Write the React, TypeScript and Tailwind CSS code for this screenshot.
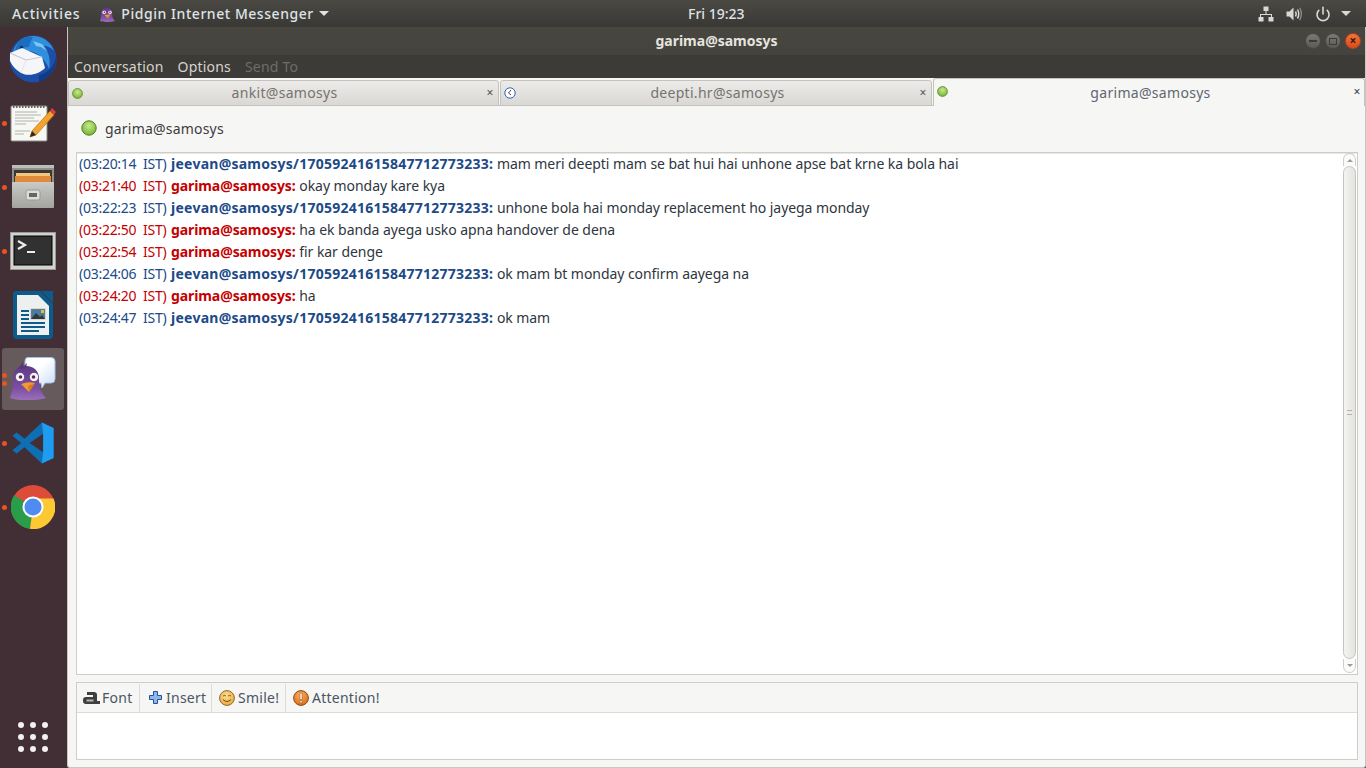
import React from "react";
import { Power } from "lucide-react";

const FONT = "font-['Noto_Sans','Open_Sans',sans-serif]";

interface Message {
  time: string;
  nick: string;
  text: string;
  mine: boolean;
}

const JEEVAN = "jeevan@samosys/17059241615847712773233:";
const GARIMA = "garima@samosys:";

const messages: Message[] = [
  { time: "(03:20:14  IST)", nick: JEEVAN, text: "mam meri deepti mam se bat hui hai unhone apse bat krne ka bola hai", mine: false },
  { time: "(03:21:40  IST)", nick: GARIMA, text: "okay monday kare kya", mine: true },
  { time: "(03:22:23  IST)", nick: JEEVAN, text: "unhone bola hai monday replacement ho jayega monday", mine: false },
  { time: "(03:22:50  IST)", nick: GARIMA, text: "ha ek banda ayega usko apna handover de dena", mine: true },
  { time: "(03:22:54  IST)", nick: GARIMA, text: "fir kar denge", mine: true },
  { time: "(03:24:06  IST)", nick: JEEVAN, text: "ok mam bt monday confirm aayega na", mine: false },
  { time: "(03:24:20  IST)", nick: GARIMA, text: "ha", mine: true },
  { time: "(03:24:47  IST)", nick: JEEVAN, text: "ok mam", mine: false },
];

const PidginBird = ({ width, height, id }: { width: number; height: number; id: string }) => (
  <svg width={width} height={height} viewBox="0 0 36 38">
    <defs>
      <linearGradient id={id} x1="0" y1="0" x2="0" y2="1">
        <stop offset="0%" stopColor="#5f3a86" />
        <stop offset="65%" stopColor="#7c4fa3" />
        <stop offset="100%" stopColor="#9a70ba" />
      </linearGradient>
    </defs>
    <path d="M0 36 C2 30 3 24 3 16 C3 8 8 4 16 4 C24 4 29 9 29 17 C29 25 31 31 36 36 C26 39 8 39 0 36Z" fill={`url(#${id})`} />
    <path d="M8 7 L13 0 L13 5 L17 1 L16 6Z" fill="#5a3480" />
    <circle cx="10" cy="15" r="4.6" fill="#f6f0f8" stroke="#4b2a6b" strokeWidth="0.6" />
    <circle cx="24" cy="15" r="4.6" fill="#f6f0f8" stroke="#4b2a6b" strokeWidth="0.6" />
    <circle cx="10.5" cy="15" r="1.8" fill="#5b2a5a" />
    <circle cx="23.5" cy="15" r="1.8" fill="#5b2a5a" />
    <path d="M11 22 Q18 19 25 21 L19 30Z" fill="#f09a30" />
    <path d="M18 24 L25 21 L19 30Z" fill="#d97a1c" />
  </svg>
);

const Thunderbird = () => (
  <svg width="48" height="48" viewBox="0 0 48 48">
    <circle cx="24" cy="24" r="23.5" fill="#1c4fa8" />
    <path d="M30 47 C40 44 48 34 47 22 C46 30 40 38 30 40Z" fill="#123a85" />
    <path d="M4 17 C6 9 12 2 22 1 C32 0 42 6 45 16 C40 11 37 11 35 11 C40 17 42 26 40 34 C37 26 32 20 24 17 C18 15 10 15 4 17Z" fill="#2f8fdc" />
    <path d="M24 6 L33 9 L38 16 L32 12 L27 11Z" fill="#7ec6f2" />
    <path d="M11 5 C14 2 20 1 24 2 C22 6 20 9 20 12 C16 12 10 14 6 16 C7 11 9 8 11 5Z" fill="#1b6dc2" />
    <circle cx="12.5" cy="12.5" r="1.7" fill="#0b2c55" />
    <path d="M1 26 L1 18 L13 13 L33 22 L36 33 C30 39 20 42 12 38 C7 35 3 31 1 26Z" fill="#f6f6f9" />
    <path d="M1 18 L17 25 L33 22" fill="none" stroke="#c4c8d4" strokeWidth="1.1" />
    <path d="M12 38 L17 25" fill="none" stroke="#dcdfe6" strokeWidth="0.8" />
  </svg>
);

const Notepad = () => (
  <svg width="46" height="38" viewBox="0 0 46 38">
    <rect x="1" y="2" width="36" height="35" rx="1" fill="#f7f7f3" stroke="#8b8b86" />
    <path d="M3 2.5 h32" stroke="#66665f" strokeWidth="3" strokeDasharray="1.5 1.5" />
    <path d="M5 8h22M5 11h26M5 14h19M5 17h24M5 20h11M5 27h15M5 30h9" stroke="#b0b0ac" strokeWidth="1" />
    <path d="M20 33 L22 27 L40 7 L44 11 L26 31Z" fill="#f2a431" stroke="#c06c10" strokeWidth="0.7" />
    <path d="M40 7 L42 4 L46 8 L44 11Z" fill="#d8413a" />
    <path d="M20 33 L22 27 L26 31Z" fill="#2a2a2a" />
  </svg>
);

const FileCabinet = () => (
  <svg width="42" height="44" viewBox="0 0 42 44">
    <defs>
      <linearGradient id="cab" x1="0" y1="0" x2="0" y2="1">
        <stop offset="0%" stopColor="#c9c9c6" />
        <stop offset="100%" stopColor="#a3a3a0" />
      </linearGradient>
    </defs>
    <rect x="0" y="0" width="42" height="42" rx="2" fill="#8f8f8c" />
    <rect x="0" y="0" width="42" height="3" fill="#bdbdba" />
    <rect x="2" y="5" width="38" height="12" fill="#3a3836" />
    <rect x="4" y="8" width="34" height="3" fill="#f3c77b" />
    <rect x="3" y="11" width="36" height="6" fill="#e08a3c" />
    <rect x="0" y="17" width="42" height="26" rx="1" fill="url(#cab)" />
    <rect x="14" y="25" width="14" height="10" rx="2" fill="#dcdcda" stroke="#9a9a98" />
    <rect x="17" y="28" width="8" height="4" fill="#66665f" />
  </svg>
);

const Terminal = () => (
  <svg width="46" height="38" viewBox="0 0 46 38">
    <rect x="0.5" y="0.5" width="45" height="37" fill="#d2d2ce" stroke="#9a9a96" />
    <rect x="4" y="4" width="38" height="29" fill="#313131" stroke="#000" />
    <path d="M8 9 L15 13 L8 17" fill="none" stroke="#eeeeee" strokeWidth="2.2" />
    <path d="M17 20 H25" stroke="#eeeeee" strokeWidth="2" />
  </svg>
);

const Writer = () => (
  <svg width="40" height="48" viewBox="0 0 40 48">
    <path d="M3 0 H27 L40 13 V44 Q40 48 36 48 H4 Q0 48 0 44 V3 Q0 0 3 0Z" fill="#0d5a8c" />
    <path d="M28 0 H40 V12Z" fill="#0d5a8c" />
    <path d="M4 4 H25 L36 15 V44 H4Z" fill="#eef0f0" />
    <path d="M8 20h8M8 24h8M8 28h8M8 32h24M8 36h24M8 40h18" stroke="#0d5a8c" strokeWidth="2" />
    <rect x="18" y="18" width="14" height="10" fill="#4b7c9c" stroke="#8a8a8a" strokeWidth="0.5" />
    <path d="M18 28 L23 22 L27 26 L29 24 L32 28Z" fill="#33373a" />
    <rect x="28" y="19" width="3" height="3" fill="#e8b93a" />
  </svg>
);

const Pidgin = () => (
  <>
    <svg className="absolute left-[22px] top-[9px]" width="32" height="32" viewBox="0 0 32 32">
      <defs>
        <linearGradient id="bub" x1="0" y1="0" x2="1" y2="1">
          <stop offset="40%" stopColor="#ffffff" />
          <stop offset="100%" stopColor="#c6dcf6" />
        </linearGradient>
      </defs>
      <path d="M4 0.5 H27 Q31 0.5 31 4 V22 Q31 26 27 26 H21 L18 31 L17 26 H4 Q1 26 1 22 V4 Q1 0.5 4 0.5Z" fill="url(#bub)" stroke="#a5c0e4" />
    </svg>
    <div className="absolute left-[8px] top-[14px]">
      <PidginBird width={36} height={38} id="birdDock" />
    </div>
  </>
);

const VSCode = () => (
  <svg width="42" height="42" viewBox="0 0 100 100">
    <path d="M71 1 L99 14 V86 L71 99 L30 60 L11 75 L1 67 L22 50 L1 33 L11 25 L30 40Z" fill="#0f6fb4" />
    <path d="M71 1 L99 14 V86 L71 99 L74 72 L74 28Z" fill="#1f9cf0" />
    <path d="M74 28 L42 50 L74 72Z" fill="#412f35" />
  </svg>
);

const Chrome = () => (
  <svg width="44" height="44" viewBox="0 0 44 44">
    <circle cx="22" cy="22" r="22" fill="#dd4b39" />
    <path d="M22 22 L3.2 10.2 A22 22 0 0 0 19 43.8 Z" fill="#2a9d4a" />
    <path d="M22 22 L22 13.5 L42.5 13.5 A22 22 0 0 1 19 43.8 Z" fill="#fcc934" />
    <circle cx="22" cy="22" r="10.5" fill="#fff" />
    <circle cx="22" cy="22" r="8.5" fill="#4f8bf0" />
  </svg>
);

const DockItem = ({ children, dots = 0, active = false }: { children?: React.ReactNode; dots?: number; active?: boolean }) => (
  <div className={`relative w-[62px] h-[62px] ml-[2px] mb-[2px] rounded-[3px] flex items-center justify-center ${active ? "bg-[#665a5c]" : ""}`}>
    {dots > 0 && (
      <div className="absolute left-0 top-0 bottom-0 flex flex-col justify-center gap-[3px]">
        {Array.from({ length: dots }).map((_, i) => (
          <span key={i} className="block w-[5px] h-[5px] rounded-full bg-[#e95420]" />
        ))}
      </div>
    )}
    {children}
  </div>
);

const StatusDot = ({ size = 10, id }: { size?: number; id: string }) => (
  <svg width={size} height={size} viewBox="0 0 16 16" className="shrink-0">
    <defs>
      <radialGradient id={id} cx="50%" cy="35%" r="70%">
        <stop offset="0%" stopColor="#c7ea8c" />
        <stop offset="100%" stopColor="#6fae2e" />
      </radialGradient>
    </defs>
    <circle cx="8" cy="8" r="7.2" fill={`url(#${id})`} stroke="#4e7f20" strokeWidth="1" />
  </svg>
);

const ClockDot = () => (
  <svg width="12" height="12" viewBox="0 0 12 12" className="shrink-0">
    <circle cx="6" cy="6" r="5.2" fill="#fff" stroke="#2f62b5" strokeWidth="1" />
    <path d="M7 3 L4.5 6 L7 8" fill="none" stroke="#333" strokeWidth="0.9" />
  </svg>
);

const ChatTab = ({ name, active, icon, grow }: { name: string; active?: boolean; icon: React.ReactNode; grow: string }) => (
  <div
    className={`${grow} relative flex pl-[3px] rounded-t-[3px] border border-[#c4c2bd] -mb-px ${
      active
        ? "h-[28px] pr-[3px] bg-[#f6f6f5] border-b-0 items-start pt-[7px]"
        : "h-[26px] pr-[4px] items-center bg-gradient-to-b from-[#ecebe9] to-[#d9d8d5] mr-px"
    }`}
  >
    {icon}
    <span className={`flex-1 text-center text-[14px] leading-none tracking-[0.3px] ${active ? "text-[#5f6670]" : "text-[#77736e]"}`}>{name}</span>
    <span className={`text-[12px] leading-none w-[8px] text-center ${active ? "text-[#2f3a4a]" : "text-[#555]"}`}>×</span>
  </div>
);

const ToolButton = ({ icon, label, className }: { icon: React.ReactNode; label: string; className: string }) => (
  <div className={`h-[28px] flex items-center ${className}`}>
    {icon}
    <span className="text-[14px] text-[#4a5563] leading-none tracking-[0.25px]">{label}</span>
  </div>
);

const FontIcon = () => (
  <svg width="17" height="13" viewBox="0 0 17 13">
    <path d="M4 1 H11 Q14 1 14 4 V10 H17 V13 H3 Q0 13 0 10 V9 Q0 6 3 6 H10 V4 H4Z" fill="#3f3f3f" />
    <rect x="3.5" y="8.5" width="7" height="2" fill="#b5b5b5" />
  </svg>
);

const PlusIcon = () => (
  <svg width="13" height="13" viewBox="0 0 13 13">
    <path d="M4.5 0.5 H8.5 V4.5 H12.5 V8.5 H8.5 V12.5 H4.5 V8.5 H0.5 V4.5 H4.5Z" fill="#8db6ea" stroke="#24539c" />
  </svg>
);

const SmileIcon = () => (
  <svg width="16" height="16" viewBox="0 0 16 16">
    <defs>
      <radialGradient id="sm" cx="45%" cy="35%" r="70%">
        <stop offset="0%" stopColor="#fbdf8f" />
        <stop offset="100%" stopColor="#eba73d" />
      </radialGradient>
    </defs>
    <circle cx="8" cy="8" r="7.4" fill="url(#sm)" stroke="#8f6a2a" />
    <path d="M4 6 Q5.5 4.8 7 6M9 6 Q10.5 4.8 12 6" fill="none" stroke="#7a4a10" strokeWidth="0.9" />
    <path d="M4 9.5 Q8 13.5 12 9.5" fill="none" stroke="#7a4a10" strokeWidth="1" />
  </svg>
);

const AttentionIcon = () => (
  <svg width="16" height="16" viewBox="0 0 16 16">
    <defs>
      <radialGradient id="att" cx="45%" cy="30%" r="75%">
        <stop offset="0%" stopColor="#f8b060" />
        <stop offset="100%" stopColor="#d96a12" />
      </radialGradient>
    </defs>
    <circle cx="8" cy="8" r="7.4" fill="url(#att)" stroke="#8f4a10" />
    <rect x="6.8" y="3" width="2.4" height="6.5" rx="0.8" fill="#fbeee0" stroke="#8f3f08" strokeWidth="0.5" />
    <circle cx="8" cy="11.8" r="1.3" fill="#fbeee0" stroke="#8f3f08" strokeWidth="0.5" />
  </svg>
);

const NetworkIcon = () => (
  <svg width="16" height="16" viewBox="0 0 16 16" fill="#d8d8d6">
    <rect x="5.5" y="0.5" width="5" height="4.5" />
    <rect x="0.5" y="11" width="5" height="4.5" />
    <rect x="10.5" y="11" width="5" height="4.5" />
    <path d="M7.5 5h1v3h5.5v3h-1V9H3v2H2V8h5.5z" />
  </svg>
);

const VolumeIcon = () => (
  <svg width="16" height="16" viewBox="0 0 16 16" fill="none">
    <path d="M0.5 5.5 H3.5 L7.5 1.5 V14.5 L3.5 10.5 H0.5Z" fill="#d8d8d6" />
    <path d="M9.5 5.5 Q11 8 9.5 10.5" stroke="#d8d8d6" strokeWidth="1.5" />
    <path d="M11.5 3.5 Q14 8 11.5 12.5" stroke="#d8d8d6" strokeWidth="1.5" />
    <path d="M13.7 1.8 Q17 8 13.7 14.2" stroke="#8d8c88" strokeWidth="1.3" />
  </svg>
);

export default function App() {
  return (
    <div className={`w-[1366px] h-[768px] overflow-hidden flex flex-col bg-[#412f35] ${FONT}`}>
      {/* top bar */}
      <div className="h-[27px] shrink-0 flex items-center bg-gradient-to-b from-[#4a4944] to-[#393834] text-[#dfe3e6] text-[14px] font-medium relative">
        <span className="ml-[12px] tracking-[0.8px]">Activities</span>
        <span className="ml-[20px] mr-[6px]">
          <PidginBird width={15} height={16} id="birdTop" />
        </span>
        <span className="tracking-[0.55px]">Pidgin Internet Messenger</span>
        <span className="ml-[5px] w-0 h-0 border-l-[5px] border-r-[5px] border-t-[5px] border-l-transparent border-r-transparent border-t-[#dfe3e6]" />
        <span className="absolute left-[688px] top-[3px] text-[14px]">Fri 19:23</span>
        <div className="ml-auto mr-[15px] flex items-center text-[#d8d8d6]">
          <span className="mr-[12px]"><NetworkIcon /></span>
          <span className="mr-[13px]"><VolumeIcon /></span>
          <Power size={16} strokeWidth={2.4} className="mr-[10px]" />
          <span className="w-0 h-0 border-l-[5px] border-r-[5px] border-t-[5px] border-l-transparent border-r-transparent border-t-[#d8d8d6]" />
        </div>
      </div>

      <div className="flex-1 flex min-h-0">
        {/* dock */}
        <div className="w-[67px] shrink-0 flex flex-col bg-[#412f35] pt-px">
          <DockItem><Thunderbird /></DockItem>
          <DockItem dots={1}><Notepad /></DockItem>
          <DockItem dots={1}><FileCabinet /></DockItem>
          <DockItem dots={1}><Terminal /></DockItem>
          <DockItem><Writer /></DockItem>
          <DockItem dots={2} active><Pidgin /></DockItem>
          <DockItem dots={1}><VSCode /></DockItem>
          <DockItem dots={1}><Chrome /></DockItem>
          <div className="mt-auto mb-[16px] ml-[18px] grid grid-cols-3 gap-x-[6px] gap-y-[6px] w-[30px]">
            {Array.from({ length: 9 }).map((_, i) => (
              <span key={i} className="block w-[6px] h-[6px] rounded-full bg-[#f2f0f0]" />
            ))}
          </div>
        </div>

        {/* window */}
        <div className="flex-1 flex flex-col min-w-0 bg-[#f6f6f5] border-l border-r border-b border-[#c8c6c2] rounded-b-[3px]">
          <div className="h-[28px] pb-[2px] shrink-0 flex items-center relative bg-gradient-to-b from-[#47463f] to-[#44433e]">
            <span className="flex-1 text-center text-[14px] font-bold text-[#e6e4df]">garima@samosys</span>
            <div className="absolute right-[4px] top-[6px] flex gap-[4px]">
              <span className="w-[16px] h-[16px] rounded-full bg-gradient-to-b from-[#7a7974] to-[#5b5a55] border border-[#4a4945] flex items-center justify-center">
                <span className="block w-[8px] h-[2px] bg-[#3c3b37]" />
              </span>
              <span className="w-[16px] h-[16px] rounded-full bg-gradient-to-b from-[#7a7974] to-[#5b5a55] border border-[#4a4945] flex items-center justify-center">
                <span className="block w-[8px] h-[7px] border border-[#3c3b37]" />
              </span>
              <span className="w-[16px] h-[16px] rounded-full bg-gradient-to-b from-[#f0743a] to-[#d9491c] border border-[#b5431a] flex items-center justify-center text-[#3c1a0a] text-[12px] leading-none font-bold">×</span>
            </div>
          </div>

          <div className="h-[23px] shrink-0 flex items-center bg-[#3c3b37] text-[14px] pl-[6px] gap-[14px] text-[#d6d3cd] tracking-[0.2px]">
            <span>Conversation</span>
            <span>Options</span>
            <span className="text-[#6f6d68]">Send To</span>
          </div>

          {/* tabs */}
          <div className="h-[28px] shrink-0 flex items-end bg-[#f6f6f5] border-b border-[#c4c2bd]">
            <ChatTab name="ankit@samosys" icon={<StatusDot size={11} id="d1" />} grow="w-[431px]" />
            <ChatTab name="deepti.hr@samosys" icon={<ClockDot />} grow="w-[432px]" />
            <ChatTab name="garima@samosys" icon={<StatusDot size={11} id="d3" />} active grow="flex-1" />
          </div>

          <div className="h-[46px] pb-[2px] shrink-0 flex items-center pl-[13px] gap-[8px]">
            <StatusDot size={16} id="d4" />
            <span className="text-[14px] text-[#3c3c3c] tracking-[0.2px]">garima@samosys</span>
          </div>

          {/* log */}
          <div className="ml-[8px] mr-[7px] h-[523px] shrink-0 flex bg-white border border-[#cfcdc9] shadow-[inset_0_1px_0_#e8e7e4]">
            <div className="flex-1 pl-[2px] text-[14px] leading-[22px] text-[#2f3640] whitespace-pre">
              {messages.map((m) => (
                <div key={m.time + m.text} className="h-[22px]">
                  <span className={`tracking-[-0.27px] ${m.mine ? "text-[#c40000]" : "text-[#204a87]"}`}>{m.time}</span>{" "}
                  <span className={`ml-px font-bold ${m.mine ? "tracking-[-0.1px] text-[#c40000]" : "tracking-[0.25px] text-[#204a87]"}`}>{m.nick}</span>{" "}
                  <span className="tracking-[-0.06px]">{m.text}</span>
                </div>
              ))}
            </div>
            <div className="w-[13px] mr-px shrink-0 flex flex-col pb-[1px]">
              <div className="h-[13px] rounded-t-[7px] border border-b-0 border-[#cfcdc9] bg-[#fbfbfa] flex items-center justify-center">
                <span className="w-0 h-0 border-l-[3px] border-r-[3px] border-b-[3px] border-l-transparent border-r-transparent border-b-[#9a9a97]" />
              </div>
              <div className="flex-1 rounded-[7px] border border-[#c6c4c0] bg-gradient-to-r from-[#f4f4f2] to-[#e4e3e0] flex items-center justify-center">
                <span className="block w-[5px] h-[5px] border-y border-[#b5b3af]" />
              </div>
              <div className="h-[14px] rounded-b-[7px] border border-t-0 border-[#cfcdc9] bg-[#fbfbfa] flex items-center justify-center">
                <span className="w-0 h-0 border-l-[3px] border-r-[3px] border-t-[3px] border-l-transparent border-r-transparent border-t-[#9a9a97]" />
              </div>
            </div>
          </div>

          {/* entry */}
          <div className="ml-[8px] mr-[7px] mt-[7px] h-[78px] shrink-0 flex flex-col border border-[#cfcdc9] bg-white">
            <div className="h-[30px] shrink-0 flex items-center bg-[#f6f6f5] border-b border-[#dddcd9]">
              <ToolButton icon={<FontIcon />} label="Font" className="w-[63px] pl-[6px] gap-[2px] border-r border-[#dddcd9]" />
              <ToolButton icon={<PlusIcon />} label="Insert" className="w-[72px] pl-[9px] gap-[4px] border-r border-[#dddcd9]" />
              <ToolButton icon={<SmileIcon />} label="Smile!" className="w-[74px] pl-[7px] gap-[3px] border-r border-[#dddcd9]" />
              <ToolButton icon={<AttentionIcon />} label="Attention!" className="pl-[7px] gap-[3px]" />
            </div>
          </div>
        </div>
      </div>
    </div>
  );
}
